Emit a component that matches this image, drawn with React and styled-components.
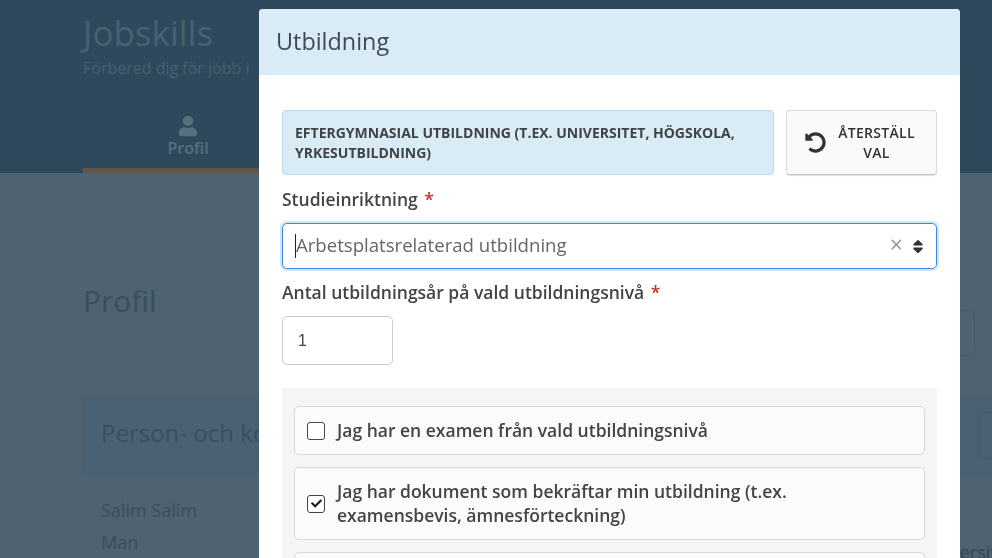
import React from 'react';
import styled, { createGlobalStyle } from 'styled-components';
import { FaUser, FaCheck, FaSort, FaUndoAlt } from 'react-icons/fa';

const GlobalStyle = createGlobalStyle`
  html, body {
    margin: 0;
    height: 100%;
    overflow: hidden;
    font-family: "Open Sans", "Noto Sans", sans-serif;
    background: #9cc4df;
  }
  * { box-sizing: border-box; }
`;

const Page = styled.div`
  height: 558px;
  overflow: hidden;
  background: #9cc4df;
`;

const Header = styled.header`
  height: 173px;
  padding: 12px 0 0 83px;
  background: #5a92b6;
  color: #90c0e0;
`;

const Brand = styled.h1`
  margin: 0;
  font-size: 35px;
  line-height: 42px;
  font-weight: 400;
`;

const Tagline = styled.p`
  margin: 3px 0 0;
  font-size: 16px;
  line-height: 22px;
  white-space: nowrap;
`;

const Tab = styled.div`
  width: 210px;
  height: 66px;
  margin-top: 28px;
  padding-top: 8px;
  display: flex;
  flex-direction: column;
  align-items: center;
  border-bottom: 5px solid #c4a88f;
  color: #aee0fa;
  font-size: 16px;
  line-height: 22px;
  font-weight: 600;
  svg { width: 18px; height: 22px; }
`;

const Main = styled.main`
  padding: 108px 0 0 83px;
`;

const TitleRow = styled.div`
  width: 892px;
  height: 40px;
  display: flex;
  justify-content: space-between;
`;

const PageTitle = styled.h2`
  margin: 0;
  font-size: 30px;
  line-height: 40px;
  font-weight: 400;
  color: #6f9ec0;
`;

const ActionBox = styled.div`
  flex: none;
  width: 42px;
  height: ${p => p.$height}px;
  margin-top: ${p => p.$top}px;
  border: 1px solid #8fb8d2;
  border-radius: 6px;
`;

const Card = styled.section`
  width: 955px;
  margin-top: 74px;
`;

const CardHead = styled.div`
  height: 81px;
  padding: 0 18px;
  display: flex;
  justify-content: space-between;
  background: #94c0e6;
  font-size: 24px;
  line-height: 76px;
  color: #6f9ec0;
`;

const CardBody = styled.div`
  padding: 18px 18px;
  display: grid;
  grid-template-columns: 821px 1fr;
  font-size: 18px;
  line-height: 32px;
  color: #6f9ec0;
`;

const CutText = styled.div`
  margin-top: 42px;
  color: #5f8cac;
  white-space: nowrap;
`;

const Overlay = styled.div`
  position: fixed;
  inset: 0;
  background: rgba(0, 0, 0, 0.5);
`;

const Modal = styled.div`
  position: fixed;
  left: 259px;
  top: 9px;
  width: 701px;
  height: 600px;
  background: #fff;
  border-radius: 4px 4px 0 0;
  overflow: hidden;
  color: #373a3c;
`;

const ModalHead = styled.div`
  height: 66px;
  padding: 0 17px 3px;
  display: flex;
  align-items: center;
  background: #d9ecf6;
  font-size: 23.4px;
  color: #3d4a55;
`;

const ModalBody = styled.div`
  padding: 35px 23px 0;
`;

const TopRow = styled.div`
  display: flex;
  gap: 12px;
`;

const Notice = styled.div`
  flex: 1;
  height: 65px;
  padding: 12px 12px;
  background: #d9ecf6;
  border: 1px solid #bcdcee;
  border-radius: 4px;
  font-size: 14px;
  line-height: 20px;
  font-weight: 700;
  text-transform: uppercase;
  color: #3f4346;
`;

const ResetButton = styled.button`
  width: 151px;
  height: 65px;
  padding: 0 19px 0 18px;
  display: flex;
  align-items: center;
  gap: 10px;
  background: #fafafa;
  border: 1px solid #ddd;
  border-bottom-color: #c4c4c4;
  border-radius: 4px;
  box-shadow: 0 1px 1px rgba(0, 0, 0, 0.12);
  font-family: inherit;
  font-size: 14px;
  line-height: 20px;
  font-weight: 600;
  letter-spacing: 0.3px;
  color: #333;
  svg { flex: none; width: 21px; height: 21px; }
`;

const ResetLabel = styled.span`
  flex: 1;
  text-align: center;
`;

const Label = styled.div`
  margin-top: ${p => p.$top}px;
  font-size: 17.5px;
  line-height: 24px;
  font-weight: 600;
  color: #444;
`;

const Required = styled.span`
  margin-left: 2px;
  color: #c9302c;
`;

const SelectBox = styled.div`
  height: 46px;
  margin-top: 12px;
  padding: 0 11px 0 12px;
  display: flex;
  align-items: center;
  border: 1.5px solid #3b88e0;
  border-radius: 5px;
  box-shadow: 0 0 0 2px #cfe5fb;
  font-size: 18.6px;
  color: #666;
`;

const Caret = styled.span`
  width: 1px;
  height: 24px;
  background: #222;
`;

const SelectValue = styled.span`
  flex: 1;
  padding-bottom: 4px;
`;

const Clear = styled.span`
  margin-right: 8px;
  padding-bottom: 3px;
  font-size: 23px;
  line-height: 1;
  color: #999;
`;

const SortIcon = styled(FaSort)`
  width: 14px;
  height: 17px;
  color: #333;
`;

const NumberBox = styled.div`
  width: 111px;
  height: 49px;
  margin-top: 12px;
  padding: 0 15px;
  display: flex;
  align-items: center;
  border: 1px solid #ccc;
  border-radius: 5px;
  font-family: "Liberation Sans", Arial, sans-serif;
  font-size: 16px;
  color: #444;
`;

const CheckPanel = styled.div`
  margin-top: 23px;
  padding: 18px 12px;
  display: flex;
  flex-direction: column;
  gap: 12px;
  background: #f4f5f6;
`;

const CheckRow = styled.div`
  min-height: ${p => p.$height}px;
  padding: 0 12px;
  display: flex;
  align-items: center;
  gap: 12px;
  background: #fbfbfb;
  border: 1px solid #d8d8d8;
  border-radius: 5px;
  font-size: 17.5px;
  line-height: 23.5px;
  font-weight: 600;
  color: #444;
`;

const Box = styled.span`
  flex: none;
  width: 18px;
  height: 18px;
  display: flex;
  align-items: center;
  justify-content: center;
  background: #fff;
  border: 1.5px solid #444;
  border-radius: 3px;
  color: #222;
  svg { width: 11px; height: 11px; }
`;

export default function App() {
  return (
    <>
      <GlobalStyle />
      <Page>
        <Header>
          <Brand>Jobskills</Brand>
          <Tagline>Förbered dig för jobb i</Tagline>
          <Tab>
            <FaUser />
            Profil
          </Tab>
        </Header>
        <Main>
          <TitleRow>
            <PageTitle>Profil</PageTitle>
            <ActionBox $top={29} $height={46} />
          </TitleRow>
          <Card>
            <CardHead>
              Person- och kontaktuppgifter
              <ActionBox $top={17} $height={47} />
            </CardHead>
            <CardBody>
              <div>
                Salim Salim
                <br />
                Man
              </div>
              <CutText>Universitet</CutText>
            </CardBody>
          </Card>
        </Main>
      </Page>
      <Overlay />
      <Modal>
        <ModalHead>Utbildning</ModalHead>
        <ModalBody>
          <TopRow>
            <Notice>Eftergymnasial utbildning (t.ex. universitet, högskola, yrkesutbildning)</Notice>
            <ResetButton>
              <FaUndoAlt />
              <ResetLabel>ÅTERSTÄLL VAL</ResetLabel>
            </ResetButton>
          </TopRow>
          <Label $top={12}>
            Studieinriktning <Required>*</Required>
          </Label>
          <SelectBox>
            <Caret />
            <SelectValue>Arbetsplatsrelaterad utbildning</SelectValue>
            <Clear>×</Clear>
            <SortIcon />
          </SelectBox>
          <Label $top={11}>
            Antal utbildningsår på vald utbildningsnivå <Required>*</Required>
          </Label>
          <NumberBox>1</NumberBox>
          <CheckPanel>
            <CheckRow $height={49}>
              <Box />
              Jag har en examen från vald utbildningsnivå
            </CheckRow>
            <CheckRow $height={73}>
              <Box>
                <FaCheck />
              </Box>
              <span>Jag har dokument som bekräftar min utbildning (t.ex. examensbevis, ämnesförteckning)</span>
            </CheckRow>
            <CheckRow $height={49} />
          </CheckPanel>
        </ModalBody>
      </Modal>
    </>
  );
}
